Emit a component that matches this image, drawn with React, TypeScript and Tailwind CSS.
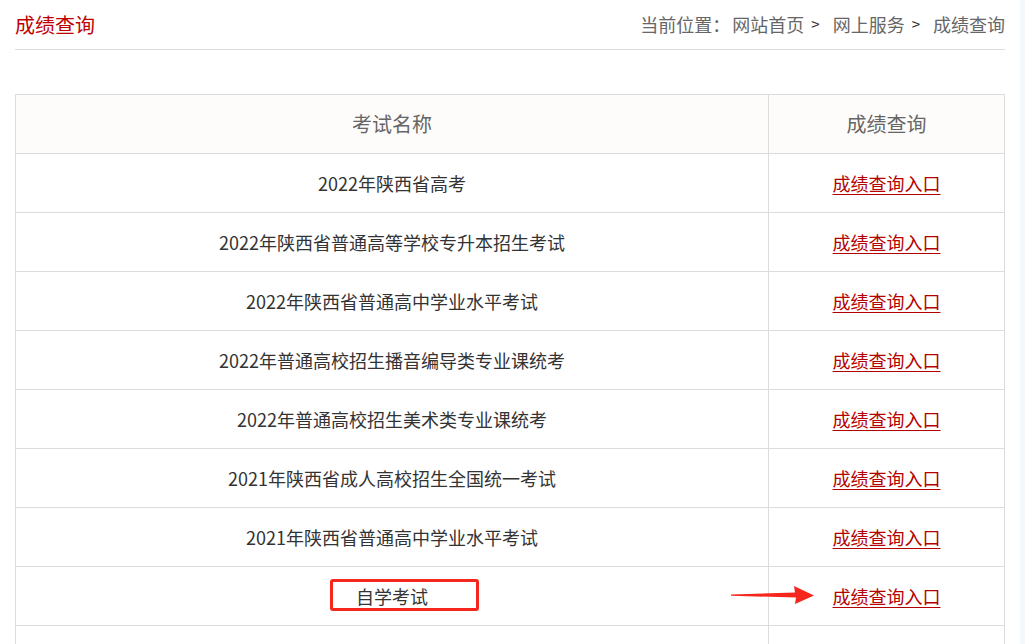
import React from 'react';

const exams = [
  '2022年陕西省高考',
  '2022年陕西省普通高等学校专升本招生考试',
  '2022年陕西省普通高中学业水平考试',
  '2022年普通高校招生播音编导类专业课统考',
  '2022年普通高校招生美术类专业课统考',
  '2021年陕西省成人高校招生全国统一考试',
  '2021年陕西省普通高中学业水平考试',
  '自学考试',
];

function Arrow() {
  return (
    <svg
      width="84"
      height="22"
      viewBox="0 0 84 22"
      className="absolute left-[-38px] top-[17px]"
    >
      <polygon points="0,10.5 64,8.5 63,2 83,11.5 64,20 65,13.5 0,11.8" fill="#f5261c" />
    </svg>
  );
}

export default function App() {
  return (
    <div
      className="flex min-h-[644px] bg-white"
      style={{ fontFamily: '"Noto Sans CJK SC", "Noto Sans", sans-serif' }}
    >
      <div className="w-[1020px] px-[15px]">
        <div className="flex items-center justify-between h-[50px] border-b border-[#dcdcdc]">
          <h1 className="text-[20px] text-[#c00000] font-normal">成绩查询</h1>
          <div className="flex items-center text-[18px] text-[#666]">
            <span className="mr-[2px]">当前位置：</span>
            <span>网站首页</span>
            <span className="text-[15px] text-[#333] ml-[7px] mr-[13px]">&gt;</span>
            <span>网上服务</span>
            <span className="text-[15px] text-[#333] ml-[7px] mr-[13px]">&gt;</span>
            <span>成绩查询</span>
          </div>
        </div>

        <table className="mt-[44px] w-[990px] border-collapse">
          <thead>
            <tr className="h-[59px] bg-[#fdfcfa]">
              <th className="w-[753px] border border-[#dcdcdc] text-[20px] font-normal text-[#666]">
                考试名称
              </th>
              <th className="border border-[#dcdcdc] text-[20px] font-normal text-[#666]">
                成绩查询
              </th>
            </tr>
          </thead>
          <tbody>
            {exams.map((name, i) => {
              const marked = name === '自学考试';
              return (
                <tr key={i} className="h-[59px]">
                  <td className="border border-[#dcdcdc] text-center text-[18px] text-[#333]">
                    {marked ? (
                      <span className="relative inline-block">
                        {name}
                        <span className="absolute left-[-26px] top-[-4px] w-[149px] h-[32px] border-[3px] border-[#f5261c] rounded-[3px]" />
                      </span>
                    ) : (
                      name
                    )}
                  </td>
                  <td className="relative border border-[#dcdcdc] text-center text-[18px]">
                    {marked && <Arrow />}
                    <a href="#" className="text-[#b50000] underline underline-offset-[3px]">
                      成绩查询入口
                    </a>
                  </td>
                </tr>
              );
            })}
            <tr className="h-[59px]">
              <td className="border border-[#dcdcdc]" />
              <td className="border border-[#dcdcdc]" />
            </tr>
          </tbody>
        </table>
      </div>
      <div className="flex-1 bg-[#f3f9fb]" />
    </div>
  );
}
